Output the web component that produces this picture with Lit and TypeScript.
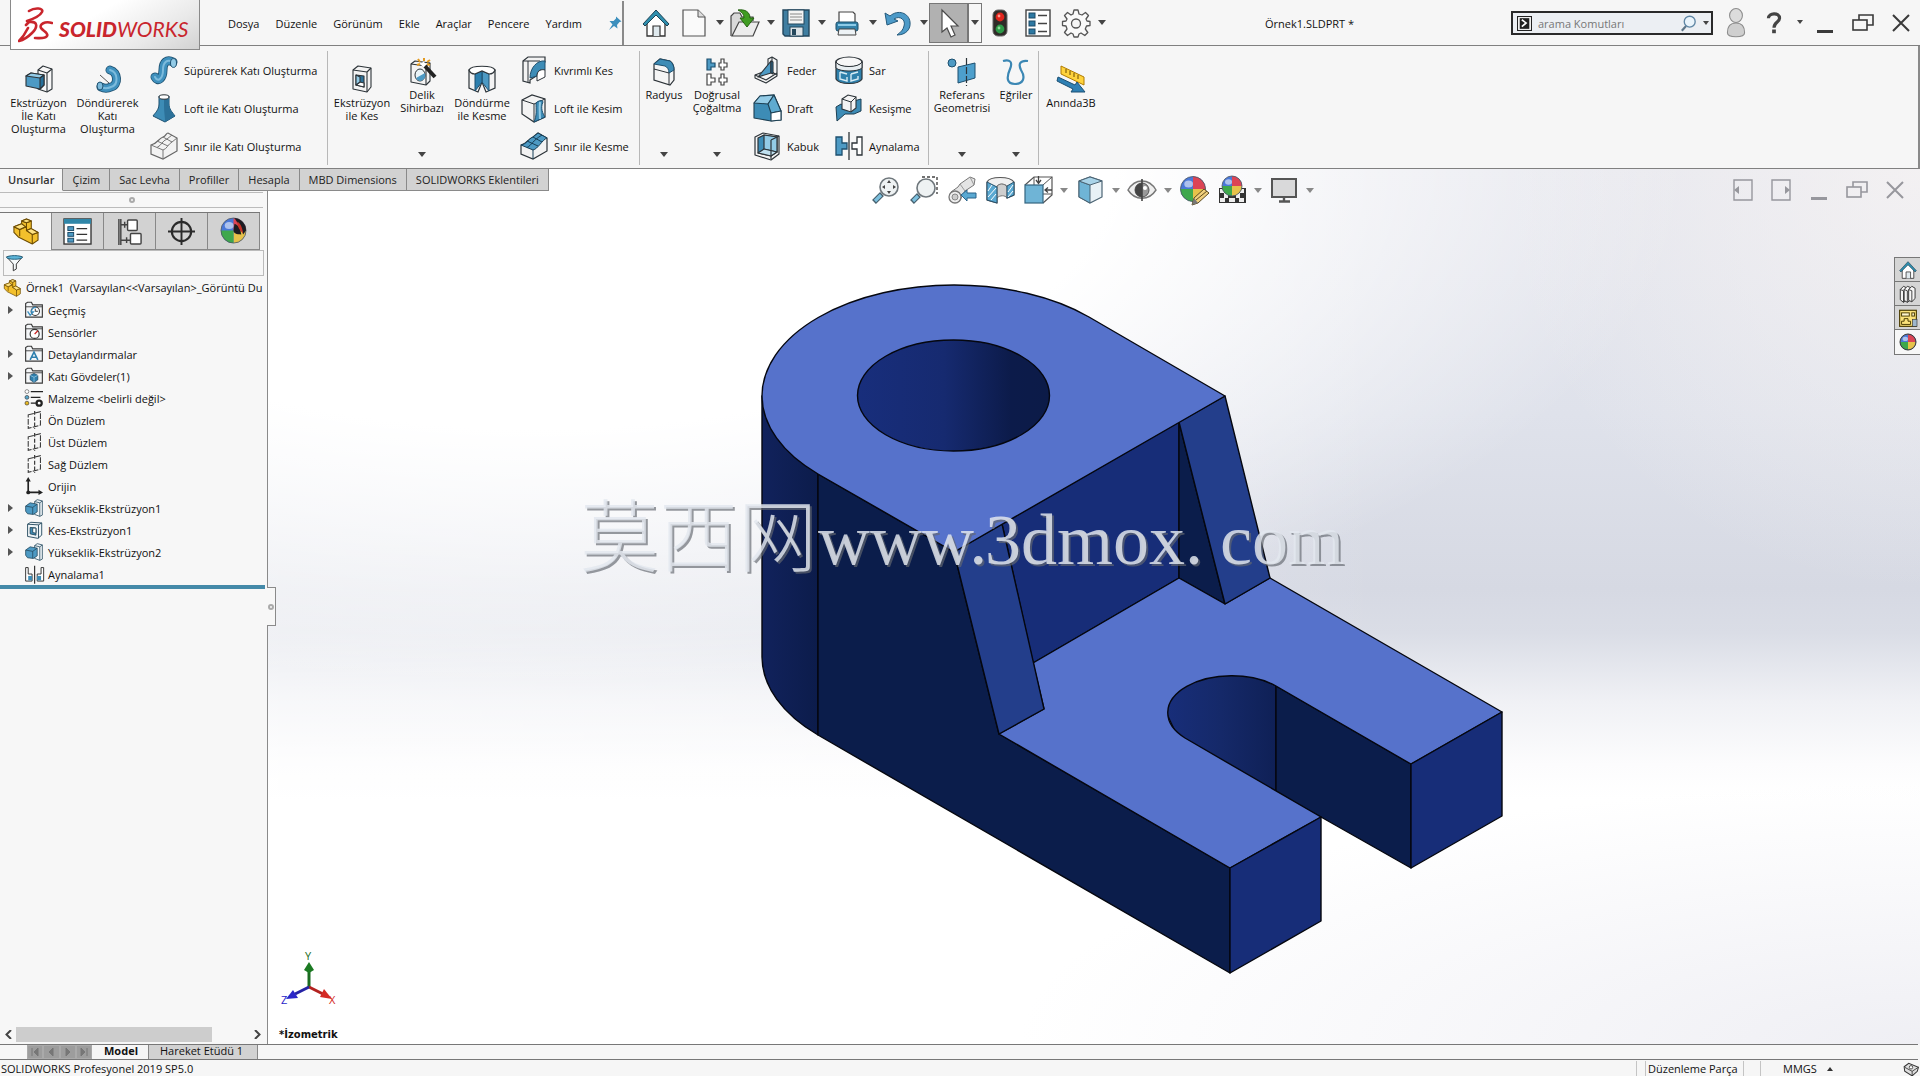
import { LitElement, html, svg, css, nothing } from "lit";
import { customElement, property } from "lit/decorators.js";

/* ---------- icon drawings, each on a 28 x 28 grid ---------- */
const K = "#2c3338";
const B = "#4d9ac4";
const L = "#93cbe6";
const D = "#27709a";

const tube = (d: string) => svg`
  <path d=${d} fill="none" stroke="#1d4f6e" stroke-width="9" stroke-linecap="round"/>
  <path d=${d} fill="none" stroke="#3f90bd" stroke-width="7.4" stroke-linecap="round"/>
  <path d=${d} fill="none" stroke="#7dbbdc" stroke-width="2" stroke-linecap="round"/>`;

const ball = (cx: number, cy: number, r: number) => svg`
  <circle cx=${cx} cy=${cy} r=${r} fill="#4a78d8"/>
  <path d="M${cx} ${cy - r} A${r} ${r} 0 0 1 ${cx + r} ${cy} L${cx} ${cy}Z" fill="#dc4455"/>
  <path d="M${cx + r} ${cy} A${r} ${r} 0 0 1 ${cx} ${cy + r} L${cx} ${cy}Z" fill="#e6c24a"/>
  <path d="M${cx} ${cy + r} A${r} ${r} 0 0 1 ${cx - r} ${cy} L${cx} ${cy}Z" fill="#3ea84c"/>
  <ellipse cx=${cx - r * 0.35} cy=${cy - r * 0.4} rx=${r * 0.35} ry=${r * 0.28} fill="#fff" opacity=".55"/>
  <circle cx=${cx} cy=${cy} r=${r} fill="none" stroke="#4a5560" stroke-width=".8"/>`;

const part = svg`<g stroke="#6b4a00" stroke-width="1.1" stroke-linejoin="round">
  <path d="M2 9 L10 6 L10 3 L15 1 L20 3 L20 11 L27 15 L27 23 L21 27 L7 20 L2 15Z" fill="#f3c02c"/>
  <path d="M10 3 L15 5 L20 3 M15 5 L15 13 L20 11 M15 13 L21 17 L27 15 M21 17 L21 27 M2 9 L8 12 L15 9 M8 12 L8 19" fill="none"/>
  <path d="M10 3 L15 1 L20 3 L15 5Z M15 13 L20 11 L27 15 L21 17Z M2 9 L10 6 L14 9 L8 12Z" fill="#ffe382"/></g>`;

const folder = svg`<path d="M1 25 V4 L4 2 H10 L12 6 H27 V25Z" fill="#f4f6f8" stroke="#3b3b3b" stroke-width="1.8"/><path d="M1 9 H27" stroke="#3b3b3b" stroke-width="1.4"/>`;

const plane = svg`<path d="M5 6 L24 1 L24 22 L5 27Z" fill="none" stroke="#333" stroke-width="1.6" stroke-dasharray="9 2"/><path d="M15 0 V28" stroke="#333" stroke-width="1.8" stroke-dasharray="6 3"/>`;

const boss = svg`<g stroke="#23475c" stroke-width="1.2" stroke-linejoin="round">
  <path d="M15 4 L19 1 L27 3 V25 L23 27 L15 24Z" fill="#eef4f7"/><path d="M23 6 V27 M15 4 L23 6 L27 3" fill="none"/>
  <path d="M1 11 L8 6 L19 8 V20 L13 24 L4 23 L1 19Z" fill=${B}/><path d="M1 11 L12 13 L19 8 M12 13 V24" fill="none"/></g>`;

const house = svg`<path d="M5 13 V27 H23 V13 L14 4Z" fill="#fff" stroke="#333" stroke-width="1.3"/>
  <path d="M1 15 L14 1 L27 15 L25 17 L14 6 L3 17Z" fill="#2f8fae" stroke="#1d4254" stroke-width="1"/>
  <path d="M11 27 V17 H18 V27" fill="#dfe9ee" stroke="#333" stroke-width="1.2"/>`;

const lens = (x: number, y: number, r: number) => svg`
  <path d="M${x - r + 2} ${y + r - 2} L2 26" stroke="#47606e" stroke-width="5.4"/>
  <path d="M${x - r + 1} ${y + r - 1} L3 25" stroke="#7cc0de" stroke-width="3.2"/>
  <circle cx=${x} cy=${y} r=${r} fill="#eef2f3" stroke="#6f777c" stroke-width="1.6"/>`;

const ICONS: Record<string, unknown> = {
  home: house,
  file: svg`<path d="M3 1 H18 L25 8 V27 H3Z" fill="#fafafa" stroke="#555" stroke-width="1.2"/><path d="M18 1 V8 H25" fill="#ddd" stroke="#555"/>`,
  open: svg`<path d="M0 27 V7 L3 4 H9 L11 8 H22 V12" fill="#d8d8d8" stroke="#444" stroke-width="1.2"/>
    <path d="M1 27 L8 13 H28 L22 27Z" fill="#ececec" stroke="#444" stroke-width="1.2"/>
    <path d="M7 1 C14 0 19 3 19 9 H23 L16 18 L9 9 H13 C13 5 11 3 7 1Z" fill="#3f9c22" stroke="#246010" stroke-width="1"/>`,
  save: svg`<path d="M1 1 H27 V27 H3 L1 25Z" fill="#3f7ea1" stroke="#22465c" stroke-width="1.4"/>
    <rect x="6" y="1" width="16" height="14" fill="#f4f4f4" stroke="#22465c"/><path d="M8 5 H20 M8 8 H20 M8 11 H20" stroke="#888"/>
    <rect x="8" y="18" width="13" height="9" fill="#dce3e7" stroke="#22465c"/><rect x="10" y="20" width="4" height="6" fill="#24485d"/>`,
  print: svg`<path d="M6 14 V3 H20 L22 5 V14Z" fill="#fff" stroke="#444" stroke-width="1.2"/><rect x="3" y="13" width="22" height="9" rx="2" fill="#3382aa" stroke="#1e4e69"/>
    <path d="M5 16 H23" stroke="#8dcbe7" stroke-width="2"/><path d="M6 20 H22 L23 26 H5Z" fill="#eef3f6" stroke="#444"/>`,
  undo: svg`<path d="M1 4 L3 16 L14 12 L10 10 C16 6 22 11 20 17 C19 21 17 23 13 26 C22 26 27 20 26 13 C25 4 14 0 6 7Z" fill="#4c9ac8" stroke="#245a7c" stroke-width="1"/>`,
  cursor: svg`<path d="M7 1 V23 L12 19 L16 28 L20 26 L16 17 H23Z" fill="#fff" stroke="#4a4a4a" stroke-width="1.2"/>`,
  traffic: svg`<rect x="7" y="1" width="14" height="26" rx="5" fill="#2f2b28" stroke="#666"/><circle cx="14" cy="8" r="4.4" fill="#e0251c"/><circle cx="13" cy="7" r="1.4" fill="#ff9a90"/><circle cx="14" cy="20" r="4.4" fill="#2d9a47"/><circle cx="13" cy="19" r="1.4" fill="#8ddc9b"/>`,
  options: svg`<rect x="2" y="1" width="24" height="26" fill="#fff" stroke="#444" stroke-width="1.4"/><g fill="#2d79a3" stroke="#1c4a66"><rect x="5" y="4" width="6" height="5"/><rect x="5" y="12" width="6" height="5"/><rect x="5" y="20" width="6" height="5"/></g><path d="M14 6.500 H23 M14 14.500 H23 M14 22.500 H23" stroke="#444" stroke-width="1.5"/>`,
  gear: svg`<path d="M12 1 h4 l1 4 l3 1 l3.500 -2.500 l3 3 L24 10 l1 2 l3 .5 v4 l-3.500 .5 l-1.200 3 l2.500 3.500 l-3 3 L19 24 l-2 1 l-1 3 h-4 l-1 -3 l-2 -1 l-3.500 2.500 l-3 -3 L5 20 l-1 -3 l-3.500 -.5 v-4 L4 12 l1 -2 L2.500 6.500 l3 -3 L9 6 l2 -1Z" fill="#fafafa" stroke="#555" stroke-width="1.3" stroke-linejoin="round"/><circle cx="14" cy="14.500" r="4.500" fill="#f6f6f6" stroke="#555" stroke-width="1.3"/>`,
  pin: svg`<path d="M16 1 L27 11 L23 12 L18 18 L19 25 L12 20 L2 28 L9 17 L3 10 L11 10 L16 5Z" fill="#3c8fbd"/>`,
  user: svg`<ellipse cx="14" cy="7" rx="6" ry="6.500" fill="#dcdcdc" stroke="#8c8c8c"/><path d="M6 23 C6 16 9 14 14 14 C19 14 22 16 22 23 C22 28 6 28 6 23Z" fill="#cfcfcf" stroke="#8c8c8c"/>`,
  help: svg`<path d="M8 9 C8 3 20 2 20 9 C20 13 14 13 14 19" fill="none" stroke="#444" stroke-width="3.400"/><rect x="12" y="21" width="4" height="4" fill="#444"/>`,
  min: svg`<path d="M6 22.500 H22" stroke="currentColor" stroke-width="3"/>`,
  restore: svg`<path d="M10 11 V6 H24 V16 H18" fill="none" stroke="currentColor" stroke-width="1.6"/><rect x="4" y="11" width="14" height="10" fill="none" stroke="currentColor" stroke-width="1.6"/>`,
  close: svg`<path d="M6 6 L22 22 M22 6 L6 22" stroke="currentColor" stroke-width="2"/>`,
  paneleft: svg`<path d="M5 4 H23 V24 H5Z" fill="none" stroke="currentColor" stroke-width="1.4"/><path d="M5 14 L10 10 V18Z" fill="currentColor"/>`,
  paneright: svg`<path d="M5 4 H23 V24 H5Z" fill="none" stroke="currentColor" stroke-width="1.4"/><path d="M23 14 L18 10 V18Z" fill="currentColor"/>`,
  console: svg`<rect x="1" y="1" width="26" height="26" fill="#fff" stroke="#222" stroke-width="2"/><rect x="5" y="4" width="18" height="20" fill="#222"/><path d="M9 7 L17 13 L9 20" stroke="#fff" stroke-width="3" fill="none"/>`,
  find: svg`<path d="M10 18 L3 26" stroke="#5f7688" stroke-width="3.500"/><circle cx="16" cy="11" r="9" fill="#eaf4fb" stroke="#5f86a4" stroke-width="2.200"/>`,

  extrude: svg`<g stroke=${K} stroke-width="1.1" stroke-linejoin="round"><path d="M13 5 L18 1 L27 4 V24 L22 27 L13 24Z" fill="#f7f7f7"/><path d="M13 5 L22 8 L27 4 M22 8 V27" fill="none"/>
    <path d="M1 11 L6 8 L19 10 V20 L15 24 L1 21Z" fill=${B}/><path d="M1 11 L6 8 L19 10 L15 13Z" fill=${L}/><path d="M15 13 L19 10 V20 L15 24Z" fill=${D}/></g>`,
  revolve: svg`${tube("M16 5 C24 7 25 20 17 22 C13 24 9 23 7 22")}<path d="M6 10 L15 18" stroke="#555"/><ellipse cx="6" cy="21" rx="3" ry="4" fill="#7dbbdc" stroke="#1d4f6e"/>`,
  sweep: svg`${tube("M5 21 C8 27 13 22 13 14 C13 6 17 3 23 6")}<ellipse cx="23.500" cy="7" rx="3" ry="4.400" fill=${L} stroke="#1d4f6e"/>`,
  loft: svg`<path d="M9 2 V10 C9 16 5 19 3 22 L15 28 L25 22 C22 18 19 15 19 10 V2Z" fill="#3d8cb6" stroke="#1d4f6e"/><path d="M14 4 V12 C14 18 15 22 15 28 L25 22 C22 18 19 15 19 10 V2Z" fill="#2c7199"/><ellipse cx="14" cy="3" rx="5" ry="2.200" fill="#fff" stroke=${K}/>`,
  boundary: svg`<path d="M1 13 C7 12 8 7 13 5 C16 4 16 1 18 1 L27 6 V19 L13 27 L1 22Z" fill="#f2f2f2" stroke="#666" stroke-width="1.2"/><path d="M1 13 L13 18 C17 17 18 12 22 10 L27 6 M13 18 V27 M7 15.500 C12 13 12 9 17 7 L22 3 M7 9 L18 14 M13 5 L22 10" fill="none" stroke="#777"/>`,
  cutextrude: svg`<g stroke=${K} stroke-width="1.1" stroke-linejoin="round"><path d="M5 5 L10 1 L23 3 V22 L19 27 L5 24Z" fill="#f3f3f3"/><path d="M5 5 L19 7 V27 M19 7 L23 3" fill="none"/><path d="M8 10 L16 11 V22 L8 20Z" fill="#2c7199"/><path d="M8 20 L12 17 L16 18 V22Z" fill="#fff"/><path d="M8 10 L12 12 V17 L8 20Z" fill=${L}/></g>`,
  holewiz: svg`<g stroke=${K} stroke-width="1.1" stroke-linejoin="round"><path d="M3 6 L7 3 L22 5 V23 L18 27 L3 24Z" fill="#f3f3f3"/><path d="M3 6 L18 8 V27 M18 8 L22 5" fill="none"/></g><ellipse cx="12" cy="17" rx="5" ry="6" fill="#eaf4f8" stroke=${K}/><path d="M8 20 A5 6 0 0 0 17 15Z" fill=${B}/>
    <path d="M16 7 L27 19" stroke="#222" stroke-width="4"/><path d="M14 5 L17 8" stroke="#fff" stroke-width="4"/><path d="M10 1 L12 4 M16 0 L16 3 M22 2 L19 4 M9 7 L12 6 M22 7 L19 6" stroke="#e39a20" stroke-width="2"/>`,
  cutrevolve: svg`<path d="M1 5 V23 L10 27 L14 17 L18 27 L27 23 V5Z" fill="#f3f3f3" stroke=${K} stroke-width="1.2"/><path d="M14 6 L21 9 V26 L14 17Z" fill=${B} stroke="#1d4f6e"/><path d="M14 6 L7 9 V26 L14 17Z" fill="#2c7fae" stroke="#1d4f6e"/><path d="M1 5 C3 0 25 0 27 5 C26 8 23 9 21 9 L14 6 L7 9 C4 9 2 8 1 5Z" fill="#fff" stroke=${K} stroke-width="1.2"/>`,
  cutsweep: svg`<path d="M3 5 L8 1 L25 1 V6 C18 9 18 14 16 20 L10 24 V27 L3 25Z" fill="#f3f3f3" stroke=${K} stroke-width="1.2"/><path d="M3 5 L20 5 M8 5 V26" stroke=${K} fill="none"/><path d="M25 5 C17 4 10 12 10 22 L17 20 C17 15 20 13 25 14Z" fill="#3d8cb6" stroke="#1d4f6e"/><path d="M17 20 C17 14 22 13 25 14 V21 L17 25Z" fill="#fff" stroke=${K}/>`,
  cutloft: svg`<path d="M2 6 L12 1 L25 5 V23 L14 28 L2 20Z" fill="#f3f3f3" stroke=${K} stroke-width="1.2"/><path d="M2 6 L14 10 V28 M14 10 L25 5" fill="none" stroke=${K}/><path d="M16 9 C19 6 23 6 23 8 C20 14 23 20 25 23 L14 28 C17 22 16 15 16 9Z" fill="#3d8cb6" stroke="#1d4f6e"/><path d="M20 8 C19 15 20 20 20 25" stroke=${L} stroke-width="2" fill="none"/>`,
  cutboundary: svg`<path d="M1 13 C7 12 8 7 13 5 L18 1 L27 6 V19 L13 27 L1 22Z" fill="#f2f2f2" stroke=${K} stroke-width="1.2"/><path d="M1 13 C7 12 8 7 13 5 L18 1 L27 6 C22 8 18 17 13 18Z" fill=${B} stroke="#163f57"/><path d="M13 18 V27 M7 15.500 C12 13 12 9 22 3 M7 9 L18 14 M13 5 L22 10" fill="none" stroke="#163f57"/>`,
  fillet: svg`<path d="M4 6 L10 1 L20 3 C23 5 24 9 24 12 V22 L20 27 L4 22Z" fill="#f5f5f5" stroke=${K} stroke-width="1.2"/><path d="M4 6 L10 1 L20 3 C23 5 24 9 24 12 L19 15 C19 11 17 9 15 8Z" fill="#3d8cb6" stroke="#1d4f6e"/><path d="M4 11 L19 15 V27" fill="none" stroke=${K}/>`,
  pattern: svg`<g fill="#fff" stroke="#444" stroke-width="1.2"><path d="M4 1 H8 V5 H12 V9 H8 V12 H4Z" fill=${B} stroke="#1d4f6e"/><path d="M16 5 H18 V1 H21 V5 H24 V9 H21 V12 H18 V9 H16Z"/><path d="M4 16 H8 V20 H12 V24 H8 V27 H4Z"/><path d="M16 20 H18 V16 H21 V20 H24 V24 H21 V27 H18 V24 H16Z"/></g>`,
  rib: svg`<g stroke=${K} stroke-width="1.1" stroke-linejoin="round"><path d="M15 3 L19 1 L24 4 V20 L13 27 L2 22 V19 L15 14Z" fill="#f4f4f4"/><path d="M19 1 V16 L24 19 M2 19 L13 24 L24 17" fill="none"/><path d="M18 5 V17 L5 21Z" fill=${B}/><path d="M18 5 L20 6 V18 L18 17Z" fill=${D}/></g>`,
  draft: svg`<g stroke="#1d3f52" stroke-width="1.1" stroke-linejoin="round"><path d="M1 9 L7 2 L21 1 L28 17 V26 L18 27 L1 24Z" fill="#3d8cb6"/><path d="M1 9 L7 2 L21 1 L15 10Z" fill=${L}/><path d="M15 10 L21 1 L28 17 L18 19Z" fill="#5fabd0"/><path d="M18 19 L28 17 V26 L18 27Z" fill="#fff"/></g>`,
  shell: svg`<g stroke=${K} stroke-width="1.2" stroke-linejoin="round"><path d="M2 5 L10 1 L26 4 V22 L18 28 L2 23Z" fill="#f4f4f4"/><path d="M5 6 L11 3 L24 5 V20 L18 24 L5 21Z" fill="#3d8cb6"/><path d="M11 3 L24 5 V20 L11 17Z" fill=${L}/><path d="M5 21 L11 17 L24 20 L18 24Z" fill="#bfe0ef"/><path d="M18 8 V27 M18 8 L26 4" fill="none"/></g>`,
  wrap: svg`<path d="M1 5 V23 C4 29 24 29 27 23 V5Z" fill="#2f80ab" stroke=${K} stroke-width="1.2"/><ellipse cx="14" cy="6" rx="13" ry="5" fill="#f7f7f7" stroke=${K} stroke-width="1.2"/><path d="M1 6 V12 C5 16 23 16 27 12 V6 C24 12 4 12 1 6Z" fill="#e8eef1" stroke=${K}/><path d="M5 16 V23 L12 25 V21 M5 16 L12 18 M16 18 V25 L23 23 V20 M16 18 L23 16" stroke="#d7ecf5" stroke-width="1.4" fill="none"/>`,
  intersect: svg`<path d="M1 13 L6 10 L12 13 L19 7 L26 5 V17 L19 20 L10 20 L2 27Z" fill="#3d8cb6" stroke="#1d3f52"/><path d="M7 5 L13 1 L21 3 V14 L16 18 L7 15Z" fill="#f4f4f4" stroke=${K} stroke-width="1.1"/><path d="M7 5 L16 8 V18 M16 8 L21 3" fill="none" stroke=${K}/>`,
  mirror: svg`<path d="M1 5 H7 V11 H12 V17 H7 V23 H1Z" fill=${B} stroke="#1d4f6e" stroke-width="1.3"/><path d="M27 5 H22 V11 H17 V17 H22 V23 H27Z" fill="#fff" stroke=${K} stroke-width="1.3"/><path d="M14 0 V28" stroke=${K} stroke-width="1.3"/>`,
  refgeo: svg`<circle cx="4" cy="5" r="4" fill=${B} stroke="#1d4f6e"/><path d="M10 9 L27 5 V20 L10 25Z" fill="#4d9fcc" stroke="#1d4f6e"/><path d="M18.500 0 V28" stroke=${K} stroke-width="1.2" stroke-dasharray="7 2"/>`,
  curves: svg`<path d="M1 3 C8 1 11 4 8 11 C4 20 5 26 13 26 C21 26 24 20 19 12 C16 6 18 2 26 3" fill="none" stroke="#3b87b4" stroke-width="2.200"/>`,
  instant: svg`<path d="M4 1 L27 12 V20 L4 9Z" fill="#ffd33c" stroke="#b07b00"/><path d="M9 4 V8 M13 6 V10 M17 8 V12 M21 10 V14" stroke="#6b4b00"/><path d="M1 12 L18 20 L20 17 L28 27 L14 27 L16 24 L0 16Z" fill="#2e80b4" stroke="#1b4f72"/>`,

  zoomfit: svg`${lens(17, 11, 9)}<path d="M17 4 L15 7 H19Z M17 18 L15 15 H19Z M10 11 L13 9 V13Z M24 11 L21 9 V13Z" fill="#444"/>`,
  zoomarea: svg`<path d="M12 1 H27 V18" fill="none" stroke="#444" stroke-width="1.400" stroke-dasharray="3 2"/>${lens(16, 12, 9)}`,
  prevview: svg`<path d="M3 16 L10 11 L12 8 L22 1 L27 3 L26 9 L17 15 L12 24Z" fill="#e4e4e4" stroke="#777"/><path d="M12 8 L17 15 M22 1 L26 9" stroke="#999"/><circle cx="7" cy="21" r="6" fill="#eee" stroke="#777" stroke-width="1.300"/><circle cx="7" cy="21" r="3" fill="#ccc" stroke="#888"/><path d="M13 19 L19 14 V17 H28 V22 H19 V25Z" fill="#5aa9d2" stroke="#28628a"/>`,
  section: svg`<path d="M1 6 C4 0 24 0 28 6 V19 L21 22 V11 C19 7 12 8 11 11 V27 L1 24Z" fill="#f0f0f0" stroke="#555" stroke-width="1.200"/><path d="M11 11 C12 7 19 7 21 11 V22 C19 19 14 19 11 22Z" fill="#cfcfcf" stroke="#777"/><path d="M1 6 L11 11 V27 L1 24Z M21 10 L28 6 V19 L21 22Z" fill="#5aa9d2" stroke="#28506a"/><path d="M2 15 L6 9 M2 21 L10 12 M5 24 L10 18 M22 16 L27 9 M22 21 L27 15" stroke="#fff" stroke-width="1"/>`,
  orient: svg`<path d="M1 9 L10 1 H28 V19 L19 27" fill="none" stroke="#555" stroke-width="1.200"/><path d="M19 9 L28 1 M10 1 V9 M19 18 H28" stroke="#555"/><rect x="1" y="9" width="18" height="18" fill="#6fb4d6" stroke="#34647f" stroke-width="1.200"/><path d="M14.500 0 V6 M12 4 L14.500 7.500 L17 4 M28 14 H22 M24 11.500 L21 14 L24 16.500" stroke="#444" stroke-width="1.300" fill="none"/>`,
  display: svg`<path d="M3 5 L14 1 L26 5 V21 L14 27 L3 21Z" fill="#e8f1f6" stroke="#4b6474" stroke-width="1.200"/><path d="M3 5 L14 9 V27 L3 21Z" fill="#6fb4d6" stroke="#4b6474"/><path d="M3 5 L14 1 L26 5 L14 9Z" fill="#a9d3e8" stroke="#4b6474"/>`,
  eye: svg`<path d="M0 14 C7 2 21 2 28 14 C21 25 7 25 0 14Z" fill="#eee" stroke="#777" stroke-width="1.400"/><circle cx="14" cy="14" r="7" fill="#999" stroke="#555"/><path d="M14 7 A7 7 0 0 0 14 21Z" fill="#444"/><path d="M14 3 V25" stroke="#444" stroke-width="1.600"/><circle cx="17" cy="12" r="2" fill="#fff"/>`,
  appearance: svg`${ball(13, 13, 12.5)}<path d="M12 29 L14 22 L24 13 L29 17 L18 27Z" fill="#f0cf7c" stroke="#5c4a1f"/><path d="M12 29 L14 22 L18 27Z" fill="#777"/><path d="M16 24 L27 15" stroke="#5c4a1f"/>`,
  scene: svg`<rect x="1" y="12" width="27" height="15" fill="#333"/><g fill="#eee"><rect x="2" y="13" width="4" height="4"/><rect x="6" y="17" width="4" height="5"/><rect x="2" y="22" width="5" height="4"/><rect x="11" y="22" width="6" height="4"/><rect x="18" y="17" width="4" height="5"/><rect x="22" y="13" width="4" height="4"/><rect x="21" y="22" width="5" height="4"/></g>${ball(14, 10, 10)}`,
  monitor: svg`<rect x="2" y="3" width="24" height="18" fill="#d9d9da" stroke="#555" stroke-width="2"/><path d="M14 21 V25 M9 25.500 H20" stroke="#555" stroke-width="2.400"/>`,

  part,
  property: svg`<rect x="0" y="1" width="28" height="26" fill="#fff" stroke="#333" stroke-width="1.400"/><rect x="0" y="1" width="28" height="5" fill="#2f86a8"/><g fill="#4d9ac4" stroke="#1c4a66"><rect x="4" y="9" width="6" height="4"/><rect x="4" y="15" width="6" height="4"/><rect x="4" y="21" width="6" height="4"/></g><path d="M13 11 H24 M13 17 H24 M13 23 H24" stroke="#333" stroke-width="1.200"/>`,
  config: svg`<path d="M3 1 V28 M5 1 V28 M5 7 H12 M5 23 H15" stroke="#444" stroke-width="1.500"/><path d="M9 4 V10 M11 20 V26" stroke="#444" stroke-width="1.500"/><rect x="12" y="2" width="10" height="11" rx="1" fill="#fff" stroke="#444" stroke-width="1.500"/><rect x="15" y="16" width="11" height="11" rx="1" fill="#fff" stroke="#444" stroke-width="1.500"/>`,
  target: svg`<circle cx="14" cy="14" r="10" fill="none" stroke="#2b2b2b" stroke-width="2.200"/><path d="M14 0 V28 M0 14 H28" stroke="#2b2b2b" stroke-width="2"/>`,
  sphere: svg`${ball(14, 13, 13)}<path d="M15 0 A13 13 0 0 1 27 13 L24 17 C22 10 20 8 15 0Z" fill="#1c1c22"/><path d="M15 6 C20 8 21 11 22 17 C17 17 14 16 14 13Z" fill="#1c1c22"/><path d="M18 4 C22 6 23 11 24 16 C20 13 18 9 18 4Z" fill="#c53127"/>`,
  funnel: svg`<path d="M1 3 L12 15 V26 L17 23 V15 L27 3Z" fill="#f6fafb" stroke="#333" stroke-width="1.600"/><ellipse cx="14" cy="4" rx="13" ry="3" fill="#5cb4d8" stroke="#1d5874" stroke-width="1.500"/>`,
  history: svg`${folder}<circle cx="16" cy="16" r="6.500" fill="#fff" stroke="#333" stroke-width="1.600"/><path d="M16 12 V16 H20" fill="none" stroke="#333" stroke-width="1.500"/><path d="M4 16 L8 22 L13 17 L10 17 C10 13 13 10 17 10" fill="none" stroke="#3a8fc0" stroke-width="2"/>`,
  sensor: svg`${folder}<circle cx="15" cy="17" r="7" fill="#fff" stroke="#333" stroke-width="1.800"/><path d="M15 17 L20 12" stroke="#c22" stroke-width="2"/>`,
  annot: svg`${folder}<path d="M8 23 L14 11 L20 23 M10 19 H18" fill="none" stroke="#2d7fae" stroke-width="2.400"/>`,
  bodies: svg`${folder}<path d="M8 13 L14 10 L20 13 V20 L14 24 L8 20Z" fill="#2d7fae" stroke="#173f57"/><path d="M8 13 L14 16 L20 13 M14 16 V24" stroke="#a9d7ee" fill="none"/>`,
  material: svg`<g stroke="#222" stroke-width="2"><path d="M9 4 H28 M9 13 H24 M9 22 H17"/></g><circle cx="3" cy="4" r="3" fill="#fff" stroke="#555"/><circle cx="3" cy="13" r="3" fill="#57a6cc" stroke="#333"/><circle cx="3" cy="22" r="3" fill="#e8b923" stroke="#333"/><circle cx="22" cy="22" r="4" fill="#fff" stroke="#222" stroke-width="3.500"/>`,
  plane,
  origin: svg`<path d="M5 3 V24 H24" fill="none" stroke="#222" stroke-width="2.600"/><path d="M5 0 L1 7 H9Z M28 24 L21 20 V28Z" fill="#222"/><circle cx="5" cy="24" r="3" fill="#222"/>`,
  boss,
  cut: svg`<g stroke="#23475c" stroke-width="1.400" stroke-linejoin="round"><path d="M4 5 L9 2 L26 3 V22 L20 27 L4 24Z" fill="#eef4f7"/><path d="M4 5 L21 6 V27 M21 6 L26 3" fill="none"/><path d="M8 10 L17 11 V22 L8 20Z" fill="#3d8cb6"/><path d="M12 11 H17 V19 L12 18Z" fill="#fff"/></g>`,
  mirrorf: svg`<path d="M1 4 H5 V14 H11 V25 H1Z M29 4 H25 V14 H19 V25 H29Z" fill="#fff" stroke="#333" stroke-width="1.500"/><rect x="5" y="17" width="6" height="7" fill="#3d8cb6"/><rect x="19" y="17" width="6" height="7" fill="#3d8cb6"/><path d="M15 1 V29" stroke="#222" stroke-width="1.700"/>`,
  library: svg`<g fill="#f6f6f6" stroke="#333" stroke-width="1.500" stroke-linejoin="round"><path d="M2 7 L7 2 L11 4 V24 L7 27 L2 23Z"/><path d="M8 7 L13 2 L18 4 V23 L13 27 L8 24Z"/><path d="M15 7 L20 2 L25 5 V21 L20 26 L15 24Z"/></g><path d="M2 7 L7 9 V27 M8 7 L13 9 V27 M15 7 L20 9 V26" fill="none" stroke="#333" stroke-width="1.400"/>`,
  palette: svg`<rect x="1" y="2" width="26" height="25" fill="#fbe27a" stroke="#4a3b00" stroke-width="1.800"/><rect x="4" y="6" width="12" height="5" fill="#fff6cf" stroke="#4a3b00" stroke-width="1.500"/><rect x="20" y="6" width="4" height="5" fill="#fff6cf" stroke="#4a3b00" stroke-width="1.500"/><path d="M8 15 H14 V19 H18 V24 H4 V19 H8Z" fill="#fbe27a" stroke="#4a3b00" stroke-width="1.500"/><rect x="21" y="16" width="7" height="11" fill="#9db6cc" stroke="#333"/>`,
  globe: svg`${ball(14, 14, 12)}<circle cx="14" cy="14" r="12.500" fill="none" stroke="#222" stroke-width="1.200"/>`,
  tag: svg`<path d="M2 10 L10 4 L27 11 L25 18 L16 26 L3 18Z" fill="#ddd" stroke="#333" stroke-width="1.800"/><path d="M3 11 L16 18 L27 11 M16 18 V26" fill="none" stroke="#333" stroke-width="1.500"/><circle cx="14" cy="11" r="3" fill="#fff" stroke="#333" stroke-width="1.400"/>`,
};

@customElement("sw-icon")
export class SwIcon extends LitElement {
  @property() name = "";
  @property({ type: Number }) size = 28;
  static styles = css`
    :host { display: inline-flex; flex: none; }
    svg { display: block; overflow: visible; }
  `;
  render() {
    return html`<svg width=${this.size} height=${this.size} viewBox="0 0 28 28" aria-hidden="true">${ICONS[this.name] ?? nothing}</svg>`;
  }
}

/* ---------- page data ---------- */
const MENUS = ["Dosya", "Düzenle", "Görünüm", "Ekle", "Araçlar", "Pencere", "Yardım"];

interface Tool { icon: string; label: string; menu?: boolean; active?: boolean }
const QUICK: Tool[] = [
  { icon: "home", label: "Hoş Geldiniz" },
  { icon: "file", label: "Yeni", menu: true },
  { icon: "open", label: "Aç", menu: true },
  { icon: "save", label: "Kaydet", menu: true },
  { icon: "print", label: "Yazdır", menu: true },
  { icon: "undo", label: "Geri Al", menu: true },
  { icon: "cursor", label: "Seç", menu: true, active: true },
  { icon: "traffic", label: "Yeniden Oluştur" },
  { icon: "options", label: "Dosya Özellikleri" },
  { icon: "gear", label: "Seçenekler", menu: true },
];
const VIEW_TOOLS: Tool[] = [
  { icon: "zoomfit", label: "Ekrana Sığdır" },
  { icon: "zoomarea", label: "Alanı Yakınlaştır" },
  { icon: "prevview", label: "Önceki Görünüm" },
  { icon: "section", label: "Kesit Görünümü" },
  { icon: "orient", label: "Görünüm Yönü", menu: true },
  { icon: "display", label: "Görüntü Stili", menu: true },
  { icon: "eye", label: "Öğeleri Gizle/Göster", menu: true },
  { icon: "appearance", label: "Görünümü Düzenle" },
  { icon: "scene", label: "Sahne Uygula", menu: true },
  { icon: "monitor", label: "Görünüm Ayarları", menu: true },
];

interface Big { icon: string; lines: string[]; menu?: boolean; high?: boolean }
interface Group { id: string; big: Big[]; small: [string, string][][] }
const GROUPS: Group[] = [
  {
    id: "g-boss",
    big: [
      { icon: "extrude", lines: ["Ekstrüzyon", "İle Katı", "Oluşturma"] },
      { icon: "revolve", lines: ["Döndürerek", "Katı", "Oluşturma"] },
    ],
    small: [[["sweep", "Süpürerek Katı Oluşturma"], ["loft", "Loft ile Katı Oluşturma"], ["boundary", "Sınır ile Katı Oluşturma"]]],
  },
  {
    id: "g-cut",
    big: [
      { icon: "cutextrude", lines: ["Ekstrüzyon", "ile Kes"] },
      { icon: "holewiz", lines: ["Delik", "Sihirbazı"], menu: true, high: true },
      { icon: "cutrevolve", lines: ["Döndürme", "ile Kesme"] },
    ],
    small: [[["cutsweep", "Kıvrımlı Kes"], ["cutloft", "Loft ile Kesim"], ["cutboundary", "Sınır ile Kesme"]]],
  },
  {
    id: "g-mod",
    big: [
      { icon: "fillet", lines: ["Radyus"], menu: true, high: true },
      { icon: "pattern", lines: ["Doğrusal", "Çoğaltma"], menu: true, high: true },
    ],
    small: [
      [["rib", "Feder"], ["draft", "Draft"], ["shell", "Kabuk"]],
      [["wrap", "Sar"], ["intersect", "Kesişme"], ["mirror", "Aynalama"]],
    ],
  },
  {
    id: "g-ref",
    big: [
      { icon: "refgeo", lines: ["Referans", "Geometrisi"], menu: true, high: true },
      { icon: "curves", lines: ["Eğriler"], menu: true, high: true },
    ],
    small: [],
  },
  { id: "g-inst", big: [{ icon: "instant", lines: ["Anında3B"] }], small: [] },
];

const TABS = ["Unsurlar", "Çizim", "Sac Levha", "Profiller", "Hesapla", "MBD Dimensions", "SOLIDWORKS Eklentileri"];

const TREE: [string, string, boolean][] = [
  ["history", "Geçmiş", true],
  ["sensor", "Sensörler", false],
  ["annot", "Detaylandırmalar", true],
  ["bodies", "Katı Gövdeler(1)", true],
  ["material", "Malzeme <belirli değil>", false],
  ["plane", "Ön Düzlem", false],
  ["plane", "Üst Düzlem", false],
  ["plane", "Sağ Düzlem", false],
  ["origin", "Orijin", false],
  ["boss", "Yükseklik-Ekstrüzyon1", true],
  ["cut", "Kes-Ekstrüzyon1", true],
  ["boss", "Yükseklik-Ekstrüzyon2", true],
  ["mirrorf", "Aynalama1", false],
];

@customElement("app-root")
export class AppRoot extends LitElement {
  static styles = css`
    :host {
      display: flex;
      flex-direction: column;
      min-height: 100vh;
      background: #f6f6f6;
      color: #111;
      font-family: "Open Sans", "Noto Sans", sans-serif;
      font-size: 11px;
      line-height: 13px;
      overflow: hidden;
    }
    * { box-sizing: border-box; }
    button, input { font: inherit; color: inherit; margin: 0; padding: 0; border: 0; background: none; }
    ul { list-style: none; margin: 0; padding: 0; }

    .top { display: flex; height: 46px; border-bottom: 1px solid #808080; align-items: stretch; padding-top: 1px; }
    .brand {
      flex: none; width: 190px; height: 50px; margin: -1px 0 0 10px; z-index: 2;
      border: 1px solid #8a8a8a; border-top: 0;
      background: linear-gradient(150deg, #fff 40%, #e9e9e9 75%, #d2d2d2);
      display: flex; align-items: center; padding-left: 7px; gap: 6px;
      color: #c9252c; font-size: 21px; line-height: 24px; font-style: italic; font-family: Lato, "Open Sans", sans-serif;
    }
    .brand span { padding-top: 8px; }
    .brand b { font-weight: 900; }
    .menus { display: flex; align-items: center; gap: 16px; padding-left: 28px; width: 424px; flex: none; border-right: 2px solid #8a8a8a; }
    .menus sw-icon { margin-left: 10px; }
    .tools { display: flex; align-items: center; }
    .top .tools { padding-left: 13px; }
    .tool { width: 38px; height: 38px; display: flex; align-items: center; justify-content: center; }
    .drop { width: 13px; height: 38px; display: flex; align-items: center; justify-content: center; }
    .views .drop { width: 14px; }
    .arrow { width: 0; height: 0; border: 4px solid transparent; border-top: 5px solid #444; border-bottom: 0; }
    .drop .arrow { margin-bottom: 2px; }
    .views .arrow { border-top-color: #888; margin: 0; }
    .active { background: #b1b1b1; outline: 1px solid #777; }
    .active + .drop { outline: 1px solid #777; }
    .title { flex: 1; align-self: center; text-align: center; }
    .search {
      display: flex; align-items: center; width: 202px; height: 24px; align-self: center; margin: 0 4px 0 0;
      border: 2px solid #2a2a2a; background: #eceff3; padding: 0 2px 0 4px; gap: 6px;
    }
    .search input { flex: 1; min-width: 0; outline: 0; }
    .search input::placeholder { color: #777; opacity: 1; }
    .search .arrow { border-width: 4px 3px 0; }
    .window { display: flex; align-items: center; color: #3a3a3a; }
    .window .drop .arrow { border-width: 4px 3px 0; }

    .ribbon { display: flex; height: 123px; padding-top: 5px; border-bottom: 1px solid #808080; border-right: 2px solid #8a8a8a; }
    .group { display: flex; height: 114px; border-right: 1px solid #b8b8b8; }
    .g-boss { width: 328px; padding-left: 4px; }
    .g-cut { width: 312px; padding-left: 4px; }
    .g-mod { width: 289px; }
    .g-ref { width: 110px; }
    .g-inst { border: 0; padding-left: 1px; }
    .big { display: flex; flex: none; flex-direction: column; align-items: center; gap: 3px; padding-top: 14px; text-align: center; }
    .big.high { padding-top: 7px; gap: 2px; }
    .g-boss .big { width: 69px; }
    .g-cut .big { width: 60px; }
    .g-mod .big { width: 48px; }
    .g-mod .big + .big { width: 58px; }
    .g-ref .big { width: 66px; }
    .g-ref .big + .big { width: 42px; }
    .g-inst .big { width: 62px; }
    .lines { display: flex; flex-direction: column; white-space: nowrap; align-items: center; }
    .big .arrow { margin: auto 0 8px; }
    .small { display: grid; flex: none; grid-template-rows: repeat(3, 38px); padding-left: 8px; }
    .g-mod .small { width: 82px; padding-left: 7px; }
    .row { display: flex; align-items: center; gap: 6px; white-space: nowrap; }

    .work {
      position: relative; flex: 1; display: flex; flex-direction: column;
      background:
        radial-gradient(ellipse 900px 260px at 100% 100%, #efeff4 0%, rgba(248, 248, 251, 0) 100%),
        radial-gradient(ellipse 420px 420px at 100% 0%, rgba(246, 243, 243, 0.8) 0%, rgba(246, 243, 243, 0) 100%),
        radial-gradient(ellipse 1150px 520px at 28% 0%, #fff 50%, rgba(255, 255, 255, 0) 100%),
        linear-gradient(90deg, rgba(255, 255, 255, 0.5) 14%, rgba(255, 255, 255, 0.4) 40%, rgba(255, 255, 255, 0) 72%),
        linear-gradient(180deg, #e6e7ee 0%, #dfe2eb 28%, #d6d9e3 48%, #dadde6 53%, #f0f1f5 61%, #fcfcfd 68%, #fff 72%);
    }
    .tabs { display: flex; height: 22px; }
    .tab {
      padding: 0 9px; border: 1px solid #8a8a8a; border-left: 0; border-top: 0;
      background: #d2d2d2; color: #222; white-space: nowrap; font-size: 11px;
    }
    .tab.on { background: #f6f6f6; font-weight: 600; color: #333; border-bottom-color: #f6f6f6; padding: 0 8px; }
    .body { flex: 1; display: flex; }
    .panel {
      position: relative; flex: none; width: 268px; background: #f7f7f7; border-right: 1px solid #8a8a8a;
      display: flex; flex-direction: column;
    }
    .grip { height: 16px; margin: 1px 4px 4px 0; border: 1px solid #bbb; border-width: 1px 0; display: flex; align-items: center; justify-content: center; }
    .dot { width: 6px; height: 6px; border: 2px solid #aaa; border-radius: 50%; }
    .ptabs { display: flex; height: 38px; border-top: 1px solid #777; width: 260px; }
    .ptab { width: 52px; display: flex; align-items: center; justify-content: center; background: #d2d2d2; border: 1px solid #888; border-width: 0 1px 1px 0; }
    .ptab.on { background: #f7f7f7; border-bottom: 0; }
    .filter { display: flex; align-items: center; height: 26px; margin: 0 3px; border: 1px solid #bbb; padding: 0 2px; gap: 4px; }
    .filter input { flex: 1; min-width: 0; outline: 0; }
    .node { display: flex; align-items: center; height: 22px; gap: 5px; white-space: nowrap; padding-left: 8px; }
    .root { padding-left: 3px; height: 23px; white-space: pre; }
    .twist { width: 12px; height: 12px; display: flex; align-items: center; }
    .twist i { border: 4px solid transparent; border-left: 5px solid #555; border-right: 0; }
    .rollback { height: 4px; margin: 0 2px 0 0; background: #458aa9; }
    .handle {
      position: absolute; right: -9px; top: 396px; width: 9px; height: 39px; background: #f7f7f7;
      border: 1px solid #8a8a8a; border-left: 0; display: flex; align-items: center; justify-content: center;
    }
    .hscroll { margin-top: auto; display: flex; height: 15px; margin-bottom: 2px; margin-right: 2px; align-items: stretch; }
    .hscroll button { width: 16px; display: flex; align-items: center; justify-content: center; }
    .track { flex: 1; display: flex; }
    .thumb { width: 84%; background: #cdcdcd; }

    .viewport { position: relative; flex: 1; display: flex; min-width: 0; }
    .scene { width: 100%; height: 100%; position: absolute; inset: 0; }
    .mark text { fill: #e2e7ee; fill-opacity: 0.84; font-weight: 300; text-shadow: 2px 2px 0 rgba(100, 104, 112, 0.8); }
    .cjk { font-family: "Noto Sans CJK SC", sans-serif; font-size: 79px; }
    .latin { font-family: "Liberation Serif", serif; font-size: 72px; }
    .views { position: absolute; left: 50%; top: -20px; transform: translateX(-50%); display: flex; align-items: center; padding-right: 4px; }
    .docs { position: absolute; right: 6px; top: -20px; display: flex; color: #97979d; }
    .pane { position: absolute; right: 0; top: 66px; width: 26px; border: 1px solid #777; border-right: 0; }
    .pane button { display: flex; width: 100%; height: 24px; align-items: center; justify-content: center; background: #d5d5d5; border-bottom: 1px solid #777; }
    .pane button:last-child { background: #f7f7f7; border-bottom: 0; }
    .triad { position: absolute; left: 10px; bottom: 32px; font-size: 11px; overflow: visible; }
    .viewname { position: absolute; left: 11px; bottom: 3px; font: bold 10px/13px "DejaVu Sans", sans-serif; }

    .sheets { display: flex; height: 16px; border-top: 1px solid #777; border-bottom: 1px solid #777; margin-right: 2px; }
    .nav { display: flex; width: 65px; margin-left: 27px; background: #9d9d9d; }
    .nav button { flex: 1; display: flex; align-items: center; justify-content: center; border: 1px solid #aaa; }
    .sheet { padding: 0 14px 2px 11px; border-right: 1px solid #888; background: #d2d2d2; line-height: 12px; }
    .sheet.on { background: #f6f6f6; font-weight: 700; width: 57px; padding: 0 0 2px 2px; text-align: center; }
    .status { display: flex; height: 16px; padding: 1px 0 0 1px; line-height: 15px; }
    .cell { border-left: 1px solid #c4c4c4; display: flex; align-items: center; }
    .first { margin-left: auto; width: 9px; }
    .mode { width: 99px; padding-left: 2px; border-right: 1px solid #c4c4c4; }
    .units { width: 143px; margin-left: 16px; padding-left: 22px; gap: 10px; }
    .up { border: 3px solid transparent; border-bottom: 4px solid #333; border-top: 0; }
    .status sw-icon { margin-right: 1px; }
  `;

  private tools(list: Tool[]) {
    return list.map(
      (t) => html`<button class="tool ${t.active ? "active" : ""}" aria-label=${t.label}><sw-icon name=${t.icon}></sw-icon></button>${
        t.menu ? html`<button class="drop" aria-label="${t.label} menüsü"><i class="arrow"></i></button>` : nothing
      }`,
    );
  }

  private group(g: Group) {
    return html`<div class="group ${g.id}">
      ${g.big.map(
        (b) => html`<button class="big ${b.high ? "high" : ""}">
          <sw-icon name=${b.icon}></sw-icon>
          <span class="lines">${b.lines.map((l) => html`<span>${l}</span>`)}</span>
          ${b.menu ? html`<i class="arrow"></i>` : nothing}
        </button>`,
      )}
      ${g.small.map(
        (col) => html`<div class="small">${col.map(([i, t]) => html`<button class="row"><sw-icon name=${i}></sw-icon>${t}</button>`)}</div>`,
      )}
    </div>`;
  }

  private model() {
    return html`<svg class="scene" viewBox="268 191 1652 853" role="img" aria-label="Örnek1">
      <defs>
        <linearGradient id="hole"><stop offset="0" stop-color="#182e7c"/><stop offset=".45" stop-color="#162a70"/><stop offset=".8" stop-color="#0c1b4a"/><stop offset="1" stop-color="#0c1b48"/></linearGradient>
        <linearGradient id="round"><stop offset="0" stop-color="#11225c"/><stop offset="1" stop-color="#0c1c4b"/></linearGradient>
        <linearGradient id="slot"><stop offset="0" stop-color="#182e7a"/><stop offset=".5" stop-color="#152969"/><stop offset="1" stop-color="#0f2056"/></linearGradient>
      </defs>
      <g stroke="#05070f" stroke-width="1.4" stroke-linejoin="round">
        <path fill="url(#round)" d="M762 396 V657 A192 111 0 0 0 818 735 V474 Z"/>
        <path fill="#0b1d4b" d="M818 474 L954 552 L999 734 L1230 868 V973 L818 735Z"/>
        <path fill="#172d78" d="M1002 524 L1179 422 V578 L1033 663Z"/>
        <path fill="#0b1d4b" d="M1179 422 V578 L1225 604Z"/>
        <path fill="url(#slot)" d="M1166 712 A64 37 0 0 1 1276 686 V794 L1180 742Z"/>
        <path fill="#0b1d4b" d="M1276 686 L1411 764 V868 L1321 817 L1276 792Z"/>
        <path fill="#5672cb" d="M999 734 L1044 709 L1033 663 L1179 578 L1225 604 L1270 578 L1502 712 L1411 764 L1276 686 A64 37 0 0 0 1185 738 L1321 817 L1230 868Z"/>
        <path fill="#172d78" d="M1230 868 L1321 817 V921 L1230 973Z"/>
        <path fill="#172d78" d="M1411 764 L1502 712 V816 L1411 868Z"/>
        <path fill="#233e8b" d="M954 552 L1002 524 L1044 709 L999 734Z"/>
        <path fill="#233e8b" d="M1225 396 L1270 578 L1225 604 L1179 422Z"/>
        <path fill="#5672cb" d="M1089 317 L1225 396 L954 552 L818 474 A192 111 0 0 1 762 396 A192 111 0 0 1 954 285 A192 111 0 0 1 1089 317Z"/>
        <ellipse cx="953.500" cy="395.500" rx="96" ry="55.500" fill="url(#hole)"/>
      </g>
      <g class="mark">
        <text class="cjk" x="580" y="566">莫西网</text>
        <text class="latin" x="818" y="564">www.</text>
        <text class="latin" x="985" y="564">3dmox.</text>
        <text class="latin" x="1220" y="564">com</text>
      </g>
    </svg>`;
  }

  render() {
    return html`
      <header class="top">
        <div class="brand">
          <svg width="35" height="36" viewBox="0 0 35 36" fill="none" stroke="#c9252c" stroke-width="2.600" stroke-linecap="round" stroke-linejoin="round" aria-hidden="true">
            <path d="M11 4 C17 0 26 1 24 5 C22 9 15 12 9 14"/><path d="M8 18 L11 15 C20 14 20 20 14 26 C10 30 5 33 1 34 C4 31 8 25 10 21"/><path d="M34 16 C27 14 21 17 23 21 C25 24 31 26 29 29 C27 32 22 31 17 31"/>
          </svg>
          <span><b>SOLID</b>WORKS</span>
        </div>
        <nav class="menus">${MENUS.map((m) => html`<button>${m}</button>`)}<sw-icon name="pin" size="14"></sw-icon></nav>
        <div class="tools">${this.tools(QUICK)}</div>
        <div class="title">Örnek1.SLDPRT *</div>
        <label class="search">
          <sw-icon name="console" size="15"></sw-icon>
          <input type="text" placeholder="arama Komutları" aria-label="arama Komutları" />
          <sw-icon name="find" size="17"></sw-icon>
          <i class="arrow"></i>
        </label>
        <div class="window">
          <button class="tool" aria-label="Oturum Aç"><sw-icon name="user" size="30"></sw-icon></button>
          <button class="tool" aria-label="Yardım"><sw-icon name="help" size="26"></sw-icon></button>
          <button class="drop" aria-label="Yardım menüsü"><i class="arrow"></i></button>
          <button class="tool" aria-label="Simge Durumuna Küçült"><sw-icon name="min"></sw-icon></button>
          <button class="tool" aria-label="Önceki Boyut"><sw-icon name="restore"></sw-icon></button>
          <button class="tool" aria-label="Kapat"><sw-icon name="close"></sw-icon></button>
        </div>
      </header>

      <section class="ribbon">${GROUPS.map((g) => this.group(g))}</section>

      <main class="work">
        <div class="tabs">${TABS.map((t, i) => html`<button class="tab ${i === 0 ? "on" : ""}">${t}</button>`)}</div>
        <div class="body">
          <aside class="panel">
            <div class="grip"><i class="dot"></i></div>
            <div class="ptabs">
              ${["part", "property", "config", "target", "sphere"].map(
                (n, i) => html`<button class="ptab ${i === 0 ? "on" : ""}" aria-label=${n}><sw-icon name=${n} size="27"></sw-icon></button>`,
              )}
            </div>
            <label class="filter"><sw-icon name="funnel" size="17"></sw-icon><input type="text" aria-label="Filtre" /></label>
            <ul class="tree">
              <li class="node root"><sw-icon name="part" size="18"></sw-icon>Örnek1  (Varsayılan&lt;&lt;Varsayılan&gt;_Görüntü Du</li>
              ${TREE.map(
                ([icon, text, open]) => html`<li class="node">
                  ${open ? html`<button class="twist" aria-label="Genişlet"><i></i></button>` : html`<span class="twist"></span>`}
                  <sw-icon name=${icon} size="18"></sw-icon><span>${text}</span>
                </li>`,
              )}
            </ul>
            <div class="rollback"></div>
            <button class="handle" aria-label="Paneli Gizle"><i class="dot"></i></button>
            <div class="hscroll">
              <button aria-label="Sola"><svg width="7" height="9" viewBox="0 0 7 9"><path d="M6 0 L1.500 4.500 L6 9" fill="none" stroke="#444" stroke-width="2"/></svg></button>
              <div class="track"><div class="thumb"></div></div>
              <button aria-label="Sağa"><svg width="7" height="9" viewBox="0 0 7 9"><path d="M1 0 L5.500 4.500 L1 9" fill="none" stroke="#444" stroke-width="2"/></svg></button>
            </div>
          </aside>
          <section class="viewport">
            ${this.model()}
            <div class="views">${this.tools(VIEW_TOOLS)}</div>
            <div class="docs">
              ${["paneleft", "paneright", "min", "restore", "close"].map(
                (n) => html`<button class="tool" aria-label=${n}><sw-icon name=${n}></sw-icon></button>`,
              )}
            </div>
            <div class="pane">
              ${["home", "library", "palette", "globe"].map(
                (n) => html`<button aria-label=${n}><sw-icon name=${n} size="18"></sw-icon></button>`,
              )}
            </div>
            <svg class="triad" width="60" height="70" viewBox="278 942 60 70" aria-hidden="true">
              <g stroke-width="3"><path d="M309 987 V966" stroke="#1b6b20"/><path d="M309 987 L325 995" stroke="#b3221f"/><path d="M309 987 L295 994" stroke="#2522a5"/></g>
              <path d="M309 962 L304 970 L309 973 L314 970Z" fill="#1b7a22"/>
              <path d="M332 999 L324 989 L320 997Z" fill="#d42a24"/><path d="M286 999 L293 990 L298 998Z" fill="#2a26c8"/>
              <text x="305" y="960" fill="#1b6b20">Y</text><text x="329" y="1004" fill="#d42a24">X</text><text x="281" y="1004" fill="#2a26c8">Z</text>
            </svg>
            <div class="viewname">*İzometrik</div>
          </section>
        </div>
      </main>

      <div class="sheets">
        <div class="nav">
          ${["M2 0 V8 M8 0 L4 4 L8 8Z", "M7 0 L3 4 L7 8Z", "M3 0 L7 4 L3 8Z", "M2 0 L6 4 L2 8Z M8 0 V8"].map(
            (d, i) => html`<button aria-label="Sekme ${i + 1}"><svg width="10" height="8" viewBox="0 0 10 8"><path d=${d} fill="#777" stroke="#777"/></svg></button>`,
          )}
        </div>
        <button class="sheet on">Model</button>
        <button class="sheet">Hareket Etüdü 1</button>
      </div>
      <footer class="status">
        <span>SOLIDWORKS Profesyonel 2019 SP5.0</span>
        <span class="cell first"></span>
        <span class="cell mode">Düzenleme Parça</span>
        <span class="cell units">MMGS <i class="up"></i></span>
        <sw-icon name="tag" size="16"></sw-icon>
      </footer>
    `;
  }
}
